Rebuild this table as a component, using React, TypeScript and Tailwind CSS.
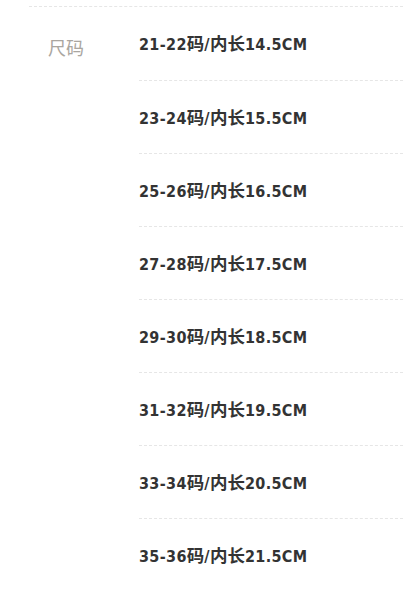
import React from "react";

const sizes = [
  "21-22码/内长14.5CM",
  "23-24码/内长15.5CM",
  "25-26码/内长16.5CM",
  "27-28码/内长17.5CM",
  "29-30码/内长18.5CM",
  "31-32码/内长19.5CM",
  "33-34码/内长20.5CM",
  "35-36码/内长21.5CM",
];

function Runs({ text }: { text: string }) {
  const parts = text.split(/([\u4e00-\u9fff]+)/).filter(Boolean);
  return (
    <>
      {parts.map((p, i) =>
        /[\u4e00-\u9fff]/.test(p) ? (
          <span key={i} className="text-[17.5px]" style={{ fontFamily: '"Noto Sans CJK SC", sans-serif' }}>
            {p}
          </span>
        ) : (
          <span key={i} className="tracking-[0.35px]">{p}</span>
        )
      )}
    </>
  );
}

export default function App() {
  return (
    <div className="w-[403px] h-[606px] bg-white overflow-hidden pt-[6px]">
      <div className="ml-[29px] border-t border-dashed border-[#e6e6e6] flex">
        <div
          className="w-[110px] shrink-0 pl-[19px] pt-[28px] text-[18px] leading-6 text-[#aaa6a0]"
          style={{ fontFamily: '"Noto Sans CJK SC", sans-serif' }}
        >
          尺码
        </div>
        <ul
          className="flex-1"
          style={{ fontFamily: '"DejaVu Sans Condensed", "DejaVu Sans", "Noto Sans CJK SC", sans-serif', fontStretch: "condensed" }}
        >
          {sizes.map((s, i) => (
            <li
              key={s}
              className={
                "h-[73px] flex items-center text-[16px] font-bold text-[#333333] whitespace-nowrap " +
                (i > 0 ? "border-t border-dashed border-[#e6e6e6]" : "")
              }
            >
              <div className="leading-none">
                <Runs text={s} />
              </div>
            </li>
          ))}
        </ul>
      </div>
    </div>
  );
}
